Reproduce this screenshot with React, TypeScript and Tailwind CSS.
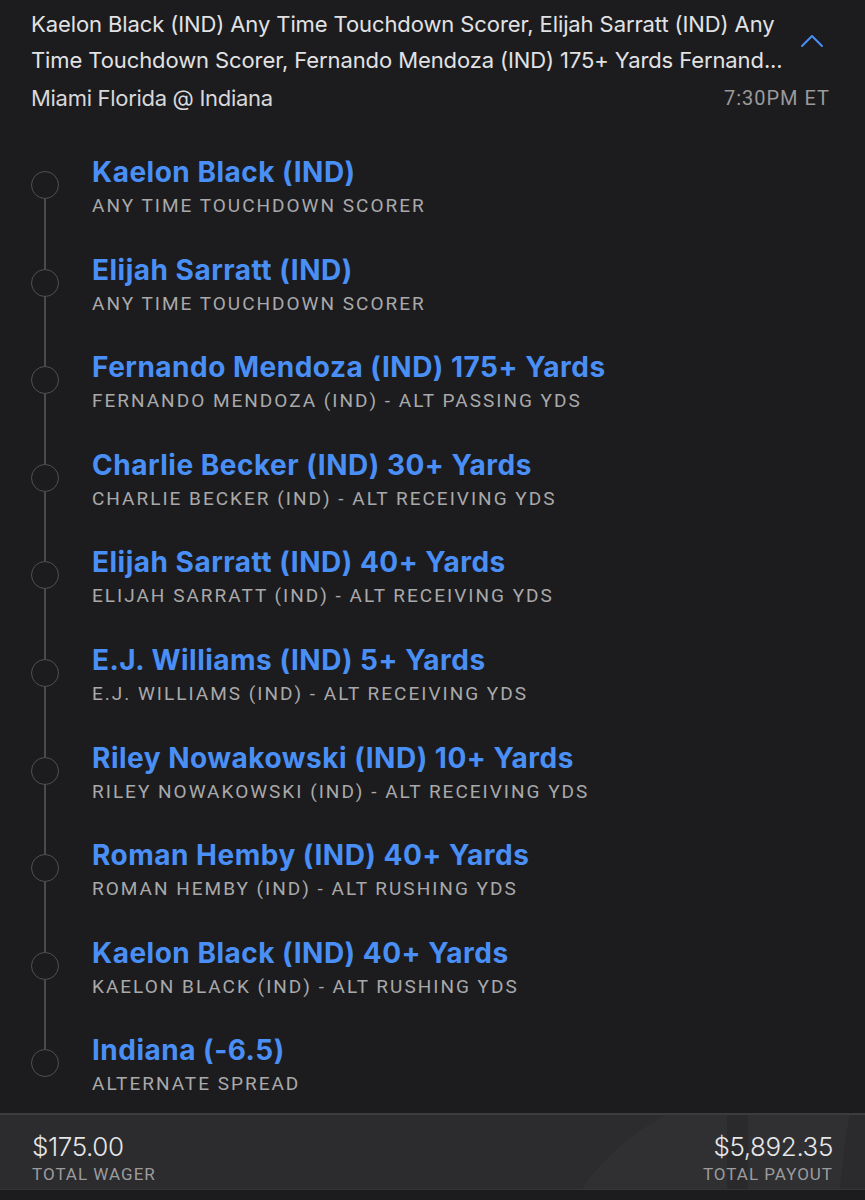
import React from "react";

type Leg = { title: string; sub: string };

const legs: Leg[] = [
  { title: "Kaelon Black (IND)", sub: "Any Time Touchdown Scorer" },
  { title: "Elijah Sarratt (IND)", sub: "Any Time Touchdown Scorer" },
  { title: "Fernando Mendoza (IND) 175+ Yards", sub: "Fernando Mendoza (IND) - Alt Passing Yds" },
  { title: "Charlie Becker (IND) 30+ Yards", sub: "Charlie Becker (IND) - Alt Receiving Yds" },
  { title: "Elijah Sarratt (IND) 40+ Yards", sub: "Elijah Sarratt (IND) - Alt Receiving Yds" },
  { title: "E.J. Williams (IND) 5+ Yards", sub: "E.J. Williams (IND) - Alt Receiving Yds" },
  { title: "Riley Nowakowski (IND) 10+ Yards", sub: "Riley Nowakowski (IND) - Alt Receiving Yds" },
  { title: "Roman Hemby (IND) 40+ Yards", sub: "Roman Hemby (IND) - Alt Rushing Yds" },
  { title: "Kaelon Black (IND) 40+ Yards", sub: "Kaelon Black (IND) - Alt Rushing Yds" },
  { title: "Indiana (-6.5)", sub: "Alternate Spread" },
];

const narrow = { fontFamily: "Roboto, 'Liberation Sans', sans-serif" };

export default function App() {
  return (
    <div className="w-[865px] h-[1200px] bg-[#1c1c1e] flex flex-col overflow-hidden" style={{ fontFamily: "Inter, 'Open Sans', sans-serif" }}>
      {/* header */}
      <div className="pl-[31px] pr-[41px] pt-[6px] flex items-start">
        <div className="flex-1 text-[22px] leading-[36px] text-[#e2e2e4] tracking-[-0.1px] whitespace-nowrap">
          <div>Kaelon Black (IND) Any Time Touchdown Scorer, Elijah Sarratt (IND) Any</div>
          <div>Time Touchdown Scorer, Fernando Mendoza (IND) 175+ Yards Fernand...</div>
        </div>
        <svg className="mt-[28px]" width="24" height="14" viewBox="0 0 24 14" fill="none">
          <path d="M2 12 L12 2 L22 12" stroke="#4a8ff5" strokeWidth="2" strokeLinecap="round" strokeLinejoin="round" />
        </svg>
      </div>
      <div className="pl-[31px] pr-[35px] mt-[6px] flex items-center justify-between h-[28px]">
        <span className="text-[22px] text-[#d8d8da] tracking-[-0.3px]">Miami Florida @ Indiana</span>
        <span className="text-[20px] text-[#9a9a9c] tracking-[1px]" style={narrow}>7:30PM ET</span>
      </div>

      {/* legs */}
      <div className="mt-[43px] pl-[31px] flex flex-col">
        {legs.map((l, i) => {
          const last = i === legs.length - 1;
          return (
            <div key={i} className={`flex ${last ? "h-[80px]" : "h-[97.6px]"}`}>
              <div className="w-[28px] flex flex-col items-center">
                <div className={`w-[1.5px] h-[16px] ${i === 0 ? "" : "bg-[#4a4a4c]"}`} />
                <div className="w-[28px] h-[28px] rounded-full border-[1.5px] border-[#505052] shrink-0" />
                <div className={`w-[1.5px] flex-1 ${last ? "" : "bg-[#4a4a4c]"}`} />
              </div>
              <div className="ml-[33px] flex flex-col">
                <div className="text-[28px] leading-[34px] font-bold text-[#4a8ff5] tracking-[0.5px]">{l.title}</div>
                <div className="mt-[3px] text-[19px] leading-[28px] uppercase text-[#a9a9ab] tracking-[2px]" style={narrow}>{l.sub}</div>
              </div>
            </div>
          );
        })}
      </div>

      {/* footer */}
      <div className="relative h-[77px] bg-[#2c2c2e] border-t-2 border-[#3c3c3e] border-b border-b-[#353537] overflow-hidden">
        <svg className="absolute inset-0" width="865" height="77" viewBox="0 0 865 77" fill="none">
          <path d="M580 77 C600 45 630 20 665 0 L865 0 L865 77 Z" fill="#303032" />
          <rect x="727" y="0" width="21" height="77" fill="#2a2a2c" />
          <path d="M840 77 C842 50 845 20 850 0 L865 0 L865 77 Z" fill="#2b2b2d" />
        </svg>
        <div className="relative flex justify-between items-start px-[32px] pt-[17px]">
          <div className="flex flex-col">
            <span className="text-[26px] leading-[30px] text-[#e6e6e8] tracking-[-0.4px] font-light">$175.00</span>
            <span className="text-[17px] leading-[24px] text-[#9c9c9e] tracking-[1px]" style={narrow}>TOTAL WAGER</span>
          </div>
          <div className="flex flex-col items-end">
            <span className="text-[26px] leading-[30px] text-[#e6e6e8] tracking-[-0.4px] font-light">$5,892.35</span>
            <span className="text-[17px] leading-[24px] text-[#9c9c9e] tracking-[1px]" style={narrow}>TOTAL PAYOUT</span>
          </div>
        </div>
      </div>
    </div>
  );
}
